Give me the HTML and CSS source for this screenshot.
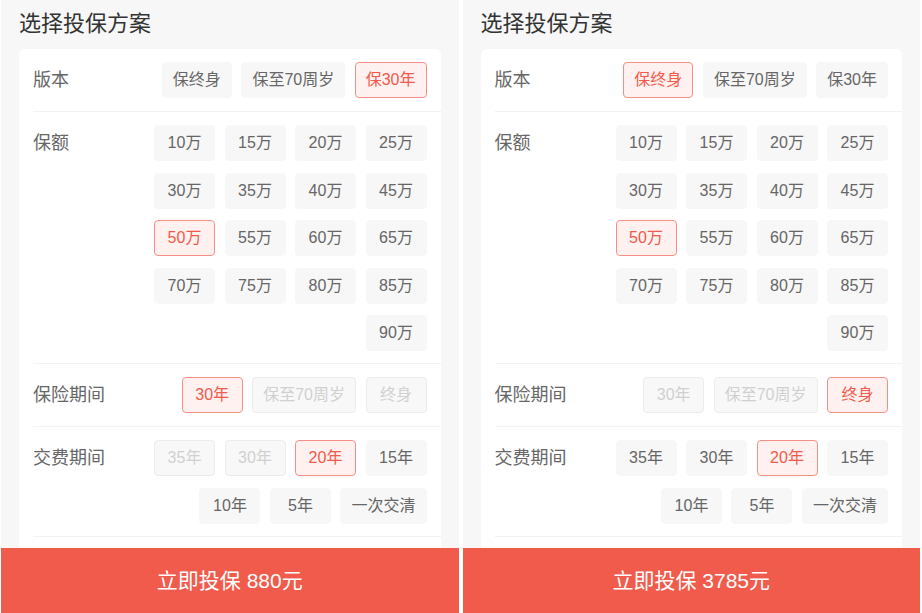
FILE: index.html
```html
<!DOCTYPE html>
<html lang="zh-CN">
<head>
  <meta charset="UTF-8" />
  <title>选择投保方案</title>
  <link rel="stylesheet" href="styles.css">
</head>
<body>
  <div class="screens">

    <!-- 方案一 -->
    <div class="screen">
      <div class="scroll">
        <h2 class="title">选择投保方案</h2>
        <div class="card">
          <div class="row">
            <div class="label">版本</div>
            <div class="options">
              <span class="opt">保终身</span>
              <span class="opt">保至70周岁</span>
              <span class="opt active">保30年</span>
            </div>
          </div>
          <div class="row">
            <div class="label">保额</div>
            <div class="options">
              <span class="opt">10万</span>
              <span class="opt">15万</span>
              <span class="opt">20万</span>
              <span class="opt">25万</span>
              <span class="opt">30万</span>
              <span class="opt">35万</span>
              <span class="opt">40万</span>
              <span class="opt">45万</span>
              <span class="opt active">50万</span>
              <span class="opt">55万</span>
              <span class="opt">60万</span>
              <span class="opt">65万</span>
              <span class="opt">70万</span>
              <span class="opt">75万</span>
              <span class="opt">80万</span>
              <span class="opt">85万</span>
              <span class="opt">90万</span>
            </div>
          </div>
          <div class="row">
            <div class="label">保险期间</div>
            <div class="options">
              <span class="opt active">30年</span>
              <span class="opt disabled">保至70周岁</span>
              <span class="opt disabled">终身</span>
            </div>
          </div>
          <div class="row">
            <div class="label">交费期间</div>
            <div class="options">
              <span class="opt disabled">35年</span>
              <span class="opt disabled">30年</span>
              <span class="opt active">20年</span>
              <span class="opt">15年</span>
              <span class="opt">10年</span>
              <span class="opt">5年</span>
              <span class="opt">一次交清</span>
            </div>
          </div>
        </div>
      </div>
      <div class="buy">立即投保 880元</div>
    </div>

    <!-- 方案二 -->
    <div class="screen">
      <div class="scroll">
        <h2 class="title">选择投保方案</h2>
        <div class="card">
          <div class="row">
            <div class="label">版本</div>
            <div class="options">
              <span class="opt active">保终身</span>
              <span class="opt">保至70周岁</span>
              <span class="opt">保30年</span>
            </div>
          </div>
          <div class="row">
            <div class="label">保额</div>
            <div class="options">
              <span class="opt">10万</span>
              <span class="opt">15万</span>
              <span class="opt">20万</span>
              <span class="opt">25万</span>
              <span class="opt">30万</span>
              <span class="opt">35万</span>
              <span class="opt">40万</span>
              <span class="opt">45万</span>
              <span class="opt active">50万</span>
              <span class="opt">55万</span>
              <span class="opt">60万</span>
              <span class="opt">65万</span>
              <span class="opt">70万</span>
              <span class="opt">75万</span>
              <span class="opt">80万</span>
              <span class="opt">85万</span>
              <span class="opt">90万</span>
            </div>
          </div>
          <div class="row">
            <div class="label">保险期间</div>
            <div class="options">
              <span class="opt disabled">30年</span>
              <span class="opt disabled">保至70周岁</span>
              <span class="opt active">终身</span>
            </div>
          </div>
          <div class="row">
            <div class="label">交费期间</div>
            <div class="options">
              <span class="opt">35年</span>
              <span class="opt">30年</span>
              <span class="opt active">20年</span>
              <span class="opt">15年</span>
              <span class="opt">10年</span>
              <span class="opt">5年</span>
              <span class="opt">一次交清</span>
            </div>
          </div>
        </div>
      </div>
      <div class="buy">立即投保 3785元</div>
    </div>

  </div>
</body>
</html>
```

FILE: styles.css
```css
* {
  box-sizing: border-box;
}

html, body {
  margin: 0;
  height: 100%;
  background: #fff;
  font-family: "Liberation Sans", "Noto Sans CJK SC", sans-serif;
}

.screens {
  display: flex;
  gap: 4px;
  height: 100%;
  padding: 0 2px 0 1px;
}

.screen {
  flex: 1;
  display: flex;
  flex-direction: column;
  background: #f7f7f7;
  overflow: hidden;
}

.scroll {
  flex: 1;
  min-height: 0;
  overflow: hidden;
  padding: 0 18px;
}

.title {
  margin: 0 0 10px;
  padding-top: 9px;
  font-size: 22px;
  line-height: 30px;
  font-weight: normal;
  color: #333;
}

/* Carte des options */
.card {
  background: #fff;
  border-radius: 6px;
  padding: 0 0 60px 14px;
}

.row {
  display: flex;
  align-items: flex-start;
  padding: 13px 14px 12px 0;
  border-bottom: 1px solid #f2f2f2;
}

.label {
  flex: none;
  width: 110px;
  font-size: 18px;
  line-height: 37px;
  color: #666;
}

.options {
  flex: 1;
  display: flex;
  flex-wrap: wrap;
  justify-content: flex-end;
  gap: 11.5px 9.5px;
}

.opt {
  min-width: 61px;
  height: 36px;
  padding: 0 10px;
  border: 1px solid #f7f7f7;
  border-radius: 4px;
  background: #f7f7f7;
  font-size: 16px;
  line-height: 34px;
  text-align: center;
  color: #666;
  white-space: nowrap;
}

.opt.active {
  border-color: #f79084;
  background: #fff1ef;
  color: #f2594b;
}

.opt.disabled {
  border-color: #ececec;
  background: #f8f8f8;
  color: #d0d0d0;
}

/* Barre d'achat */
.buy {
  flex: none;
  height: 65px;
  background: #f15b4c;
  color: #fff;
  font-size: 21px;
  line-height: 65px;
  text-align: center;
}
```
